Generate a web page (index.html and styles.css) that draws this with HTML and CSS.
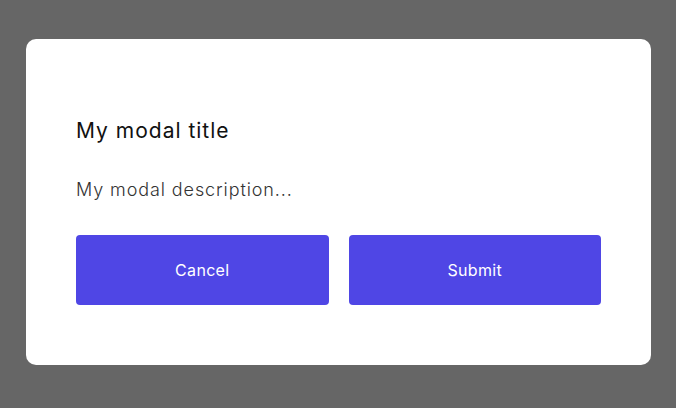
FILE: index.html
```html
<!DOCTYPE html>
<html>
<head>
    <title>Modal</title>
    <link rel="stylesheet" href="styles.css">
</head>
<body>
    <div class="modal">
        <h2 class="modal-title">My modal title</h2>
        <p class="modal-description">My modal description...</p>
        <div class="modal-actions">
            <button class="btn">Cancel</button>
            <button class="btn">Submit</button>
        </div>
    </div>
</body>
</html>
```

FILE: styles.css
```css
body {
    margin: 0;
    height: 408px;
    background-color: #666666;
    font-family: Inter, "Noto Sans", sans-serif;
    overflow: hidden;
}
.modal {
    width: 625px;
    box-sizing: border-box;
    margin: 39px 0 0 26px;
    padding: 77px 50px 60px;
    background: white;
    border-radius: 10px;
}
.modal-title {
    margin: 0;
    font-size: 21px;
    line-height: 30px;
    font-weight: 400;
    letter-spacing: 1px;
    color: #111;
}
.modal-description {
    margin: 30px 0 0;
    font-size: 18px;
    line-height: 27px;
    font-weight: 300;
    letter-spacing: 0.9px;
    color: #333;
}
.modal-actions {
    display: flex;
    gap: 20px;
    margin-top: 32px;
}
.btn {
    flex: 1;
    height: 70px;
    border: none;
    border-radius: 4px;
    background-color: #4F46E5;
    color: white;
    font-family: Inter, "Noto Sans", sans-serif;
    font-size: 16px;
    letter-spacing: 0.3px;
    cursor: pointer;
}
```
